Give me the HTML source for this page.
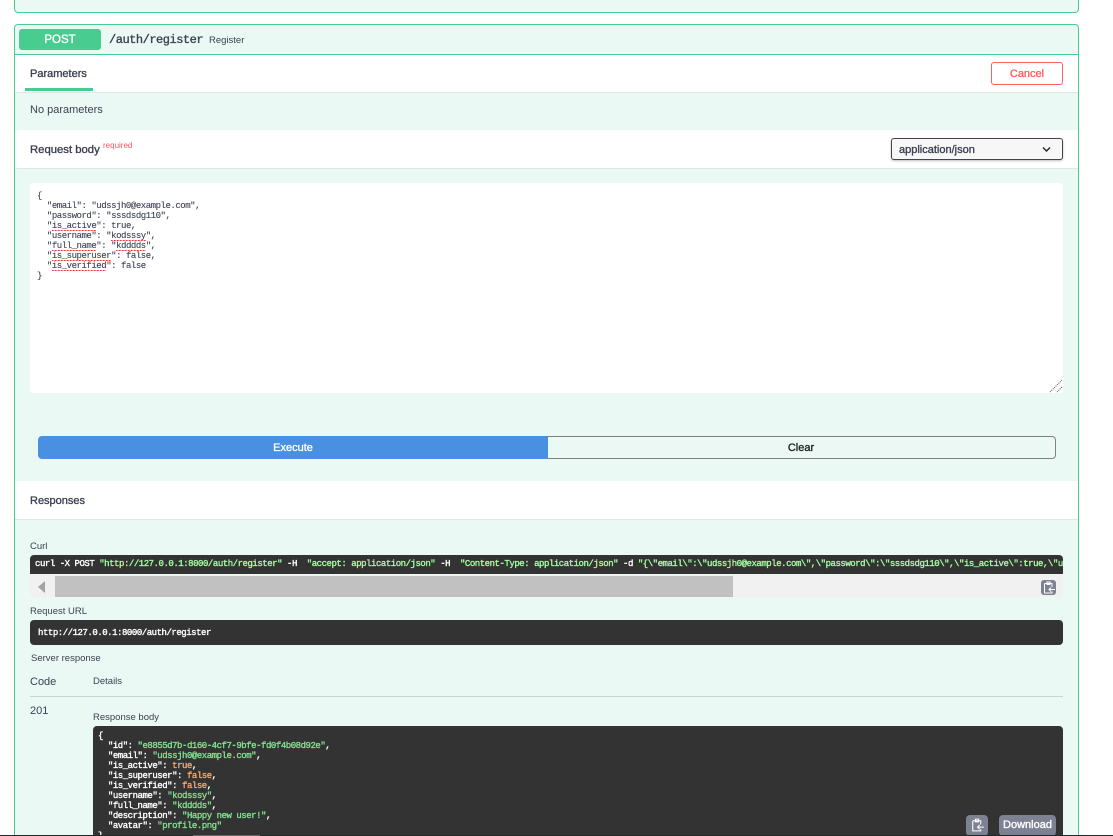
<!DOCTYPE html>
<html>
<head>
<meta charset="utf-8">
<style>
html,body{margin:0;padding:0;background:#fff;width:1113px;height:836px;overflow:hidden}
body{position:relative;font-family:"Liberation Sans",sans-serif;color:#3b4151}
.a{position:absolute;box-sizing:border-box}
.t{position:absolute;white-space:pre;line-height:14px}
.md{-webkit-text-stroke:.35px currentColor}
.m{font-family:"Liberation Mono",monospace}
.code{position:absolute;white-space:pre;font-family:"Liberation Mono",monospace;font-weight:normal;color:#fff;font-size:9px;letter-spacing:-.46px;-webkit-text-stroke:.35px currentColor}
.s{color:#a2fca2}
.g{color:#7ee28e}
.o{color:#f5a867}
u{text-decoration:none;background:repeating-linear-gradient(90deg,#e33 0 1.5px,rgba(238,51,51,.35) 1.5px 3px) 0 100%/100% 1px no-repeat}
</style>
</head>
<body>
<!-- previous block -->
<div class="a" style="left:14px;top:-10px;width:1065px;height:23px;background:#eaf9f3;border:1px solid #49cc90;border-radius:4px"></div>
<!-- main block -->
<div class="a" style="left:14px;top:24px;width:1065px;height:830px;background:#eaf9f3;border:1px solid #49cc90;border-radius:4px"></div>
<div class="a" style="left:15px;top:54px;width:1063px;height:1px;background:#49cc90"></div>
<div class="a" style="left:19px;top:29px;width:82px;height:21px;background:#49cc90;border-radius:3px"></div>
<div class="t md" style="left:19px;top:33px;width:82px;text-align:center;color:#fff;font-size:11.5px">POST</div>
<div class="t m md" style="left:109px;top:33px;font-size:12px;letter-spacing:-.48px;color:#3b4151">/auth/register</div>
<div class="t" style="left:209px;top:34px;font-size:9.5px">Register</div>

<!-- Parameters bar -->
<div class="a" style="left:15px;top:55px;width:1063px;height:38px;background:#fff;border-bottom:1px solid #dfe8e4"></div>
<div class="t md" style="left:30px;top:67px;font-size:11px">Parameters</div>
<div class="a" style="left:25px;top:88px;width:68px;height:3px;background:#49cc90"></div>
<div class="a" style="left:991px;top:62px;width:72px;height:23px;border:1px solid #ff6060;border-radius:3px;background:#fff"></div>
<div class="t md" style="left:991px;top:67px;width:72px;text-align:center;font-size:11px;color:#ff6060">Cancel</div>
<div class="t" style="left:30px;top:103px;font-size:11px">No parameters</div>

<!-- Request body -->
<div class="a" style="left:15px;top:130px;width:1063px;height:39px;background:#fff;border-bottom:1px solid #dfe8e4"></div>
<div class="t md" style="left:30px;top:143px;font-size:11.3px">Request body</div>
<div class="t" style="left:103px;top:139px;font-size:8px;color:#ff5060">required</div>
<div class="a" style="left:891px;top:138px;width:172px;height:22px;background:#f7f7f7;border:1px solid #41444e;border-radius:3px;box-shadow:0 1px 2px rgba(0,0,0,.25)"></div>
<div class="t md" style="left:899px;top:143px;font-size:11px">application/json</div>
<svg class="a" style="left:1041px;top:145px" width="11" height="9" viewBox="0 0 11 9"><path d="M2 2.5 L5.5 6 L9 2.5" fill="none" stroke="#222" stroke-width="1.4"/></svg>

<!-- textarea -->
<div class="a" style="left:30px;top:183px;width:1033px;height:210px;background:#fff;border-radius:3px"></div>
<div class="code" style="left:37px;top:191px;line-height:10px;color:#3b4151;-webkit-text-stroke:.1px #3b4151">{
  "email": "udssjh0@example.com",
  "password": "sssdsdg110",
  "<u>is_active</u>": true,
  "username": "<u>kodsssy</u>",
  "<u>full_name</u>": "<u>kdddds</u>",
  "<u>is_superuser</u>": false,
  "<u>is_verified</u>": false
}</div>
<svg class="a" style="left:1049px;top:379px" width="14" height="14" viewBox="0 0 14 14"><path d="M1 13 L13 1 M8 13 L13 8" stroke="#555" stroke-width="1" stroke-dasharray="1 1" fill="none"/></svg>

<!-- buttons -->
<div class="a" style="left:38px;top:436px;width:510px;height:23px;background:#4990e2;border-radius:4px 0 0 4px"></div>
<div class="t md" style="left:38px;top:441px;width:510px;text-align:center;color:#fff;font-size:11px">Execute</div>
<div class="a" style="left:548px;top:436px;width:508px;height:23px;border:1px solid #808080;border-left:0;border-radius:0 4px 4px 0"></div>
<div class="t md" style="left:548px;top:441px;width:506px;text-align:center;color:#222;font-size:11px">Clear</div>

<!-- Responses -->
<div class="a" style="left:15px;top:481px;width:1063px;height:39px;background:#fff;border-bottom:1px solid #dfe8e4"></div>
<div class="t md" style="left:30px;top:494px;font-size:11px">Responses</div>

<div class="t" style="left:30px;top:540px;font-size:9.5px">Curl</div>
<div class="a" style="left:30px;top:555px;width:1033px;height:19px;background:#333;border-radius:4px 4px 0 0;overflow:hidden"></div>
<div class="a" style="left:30px;top:555px;width:1033px;height:19px;overflow:hidden"><div class="code" style="left:5px;top:3px;line-height:13px">curl -X POST <span class="s">"http://127.0.0.1:8000/auth/register"</span> -H  <span class="s">"accept: application/json"</span> -H  <span class="s">"Content-Type: application/json"</span> -d <span class="s">"{\"email\":\"udssjh0@example.com\",\"password\":\"sssdsdg110\",\"is_active\":true,\"username\":</span></div></div>
<div class="a" style="left:30px;top:575px;width:1033px;height:22px;background:#f1f1f1"></div>
<div class="a" style="left:55px;top:576px;width:678px;height:21px;background:#c1c1c1"></div>
<svg class="a" style="left:37px;top:581px" width="10" height="12" viewBox="0 0 10 12"><path d="M8 0 L1 6 L8 12 Z" fill="#a3a3a3"/></svg>
<div class="a" style="left:1041px;top:580px;width:15px;height:15px;background:#7d8293;border-radius:3px"></div>
<svg class="a" style="left:1041px;top:580px" width="15" height="15" viewBox="0 0 15 15"><path d="M3.5 3.5H11V7M11 11.5V13H3.5V3.5M6 2H9V4.5H6Z" fill="none" stroke="#fff" stroke-width="1"/><path d="M14 9.5H8M10 7.5L8 9.5L10 11.5" fill="none" stroke="#fff" stroke-width="1"/></svg>

<div class="t" style="left:30px;top:605px;font-size:9.5px">Request URL</div>
<div class="a" style="left:30px;top:620px;width:1033px;height:25px;background:#333;border-radius:4px"></div>
<div class="code" style="left:38px;top:627px;line-height:13px">http://127.0.0.1:8000/auth/register</div>
<div class="t" style="left:31px;top:652px;font-size:9.5px">Server response</div>
<div class="t" style="left:30px;top:675px;font-size:11px">Code</div>
<div class="t" style="left:93px;top:675px;font-size:9.5px">Details</div>
<div class="a" style="left:30px;top:696px;width:1033px;height:1px;background:#c6d6d0"></div>
<div class="t" style="left:30px;top:704px;font-size:11px">201</div>
<div class="t" style="left:93px;top:711px;font-size:9.5px">Response body</div>

<div class="a" style="left:93px;top:726px;width:970px;height:112px;background:#333;border-radius:4px 4px 0 0"></div>
<div class="code" style="left:98px;top:731px;line-height:10px">{
  "id": <span class="g">"e8855d7b-d160-4cf7-9bfe-fd0f4b08d92e"</span>,
  "email": <span class="g">"udssjh0@example.com"</span>,
  "is_active": <span class="o">true</span>,
  "is_superuser": <span class="o">false</span>,
  "is_verified": <span class="o">false</span>,
  "username": <span class="g">"kodsssy"</span>,
  "full_name": <span class="g">"kdddds"</span>,
  "description": <span class="g">"Happy new user!"</span>,
  "avatar": <span class="g">"profile.png"</span>
}</div>
<div class="a" style="left:966px;top:815px;width:22px;height:21px;background:#7d8293;border-radius:4px"></div>
<svg class="a" style="left:969px;top:817px" width="16" height="16" viewBox="0 0 15 15"><path d="M3.5 3.5H11V7M11 11.5V13H3.5V3.5M6 2H9V4.5H6Z" fill="none" stroke="#fff" stroke-width="1"/><path d="M14 9.5H8M10 7.5L8 9.5L10 11.5" fill="none" stroke="#fff" stroke-width="1"/></svg>
<div class="a" style="left:999px;top:815px;width:57px;height:21px;background:#7d8293;border-radius:4px"></div>
<div class="t md" style="left:999px;top:818px;width:57px;text-align:center;color:#fff;font-size:11px">Download</div>

<!-- bottom strip -->
<div class="a" style="left:0;top:835px;width:1113px;height:1px;background:#20282a"></div>
<div class="a" style="left:193px;top:835px;width:67px;height:1px;background:#666"></div>
</body>
</html>
